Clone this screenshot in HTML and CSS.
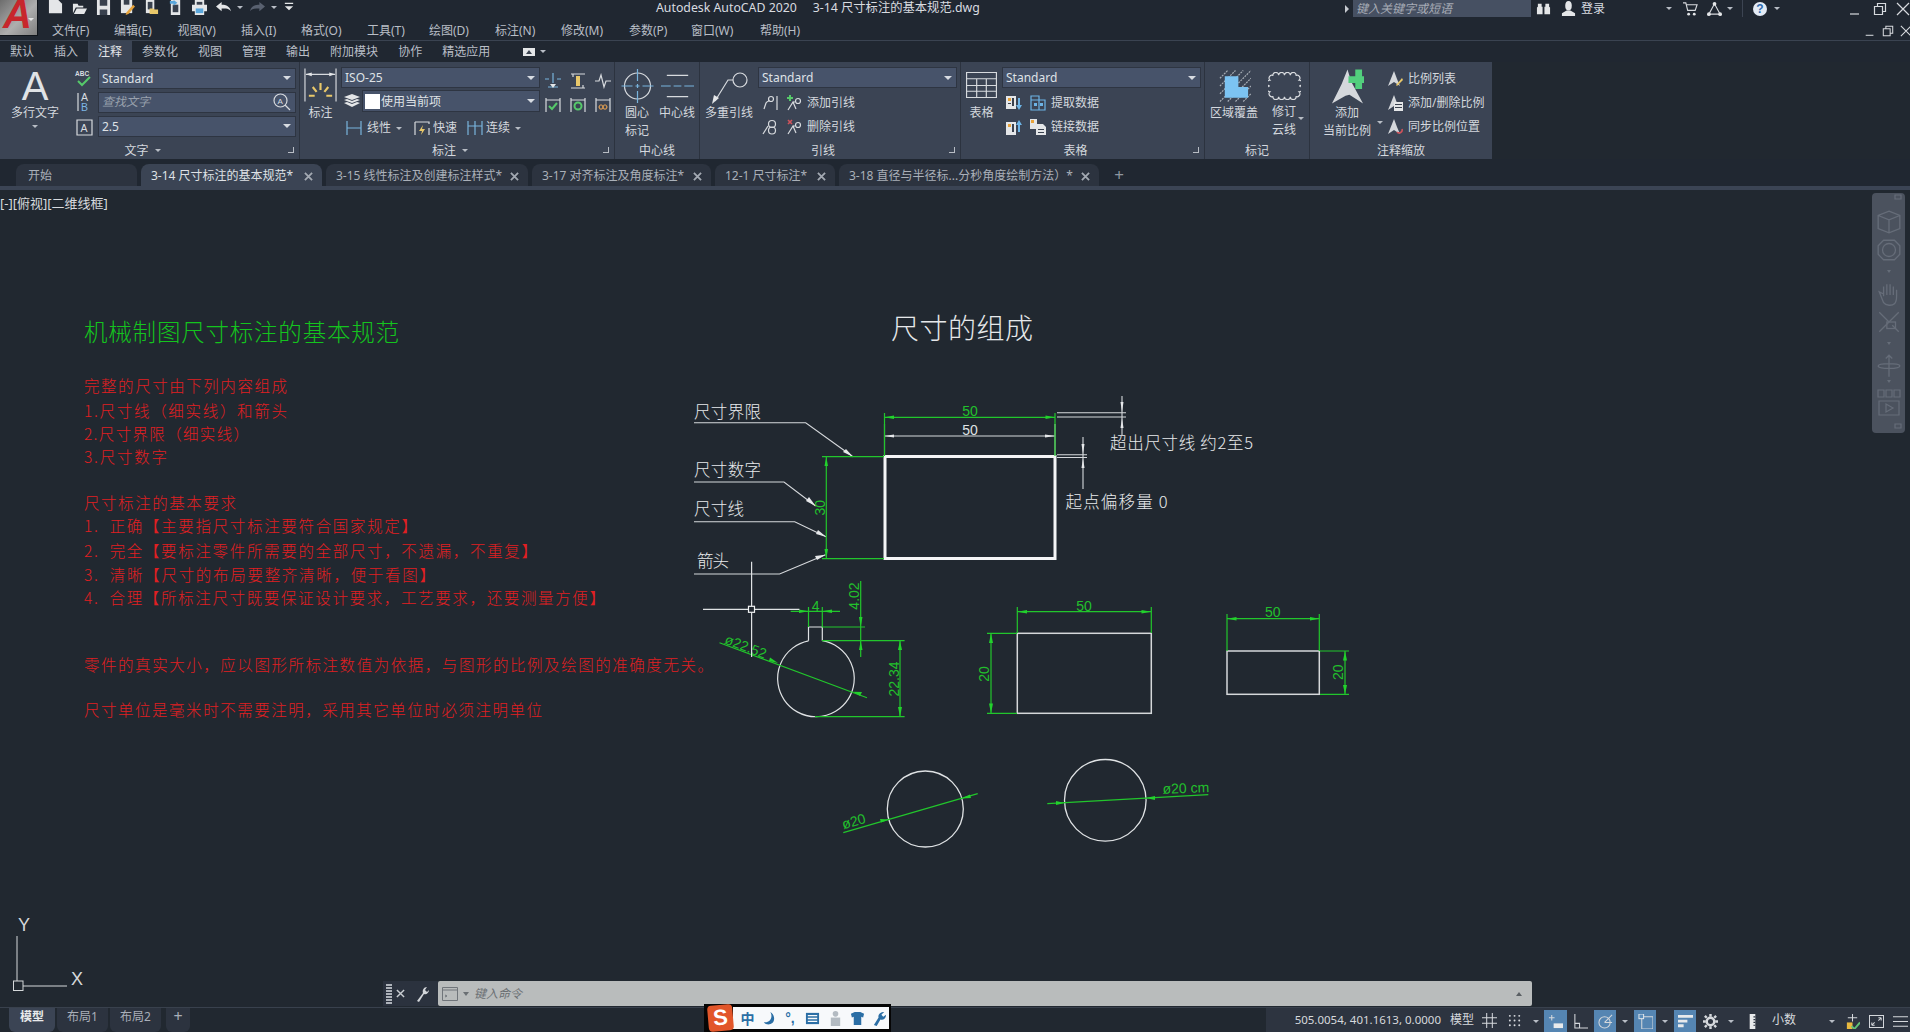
FILE: index.html
```html
<!DOCTYPE html>
<html lang="zh-CN">
<head>
<meta charset="utf-8">
<title>Autodesk AutoCAD 2020</title>
<link rel="stylesheet" href="styles.css">
</head>
<body>
<div class="app">
  <div class="appbtn"><span class="appbtn-a">A</span><i class="caret caret-light"></i></div>

  <header class="titlebar">
    <div class="qat">
      <svg class="qi" viewBox="0 0 16 16"><path class="f-lt" d="M1 0h10l4 4v10H1z"/></svg>
      <svg class="qi" viewBox="0 0 16 16"><path class="f-lt" d="M1 4h5l1 2h5v2H4L1 14zM5 9h11l-3 6H2z"/></svg>
      <svg class="qi" viewBox="0 0 16 16"><path class="f-lt" d="M1 0h14v16H1z"/><path class="f-dk" d="M4 0h8v6H4zM4 10h8v6H4z"/></svg>
      <svg class="qi" viewBox="0 0 16 16"><path class="f-lt" d="M1 0h12v14H1z"/><path class="f-dk" d="M4 0h6v5H4z"/><path class="f-or" d="M7 13l7-8 2 2-7 8-3 1z"/></svg>
      <svg class="qi" viewBox="0 0 16 16"><path class="f-lt" d="M2 0h9v14H2z"/><path class="f-dk" d="M4 2h5v8H4z"/><path class="f-yl" d="M6 9h4l1 1h4v5H6z"/></svg>
      <svg class="qi" viewBox="0 0 16 16"><path class="f-lt" d="M3 0h10v16H3z"/><path class="f-dk" d="M5 5h6v8H5z"/><path class="f-bl" d="M2 1h4V0l4 3-4 3V4H2z"/></svg>
      <svg class="qi" viewBox="0 0 16 16"><path class="f-lt" d="M3 0h10v5h3v7h-3v4H3v-4H0V5h3z"/><path class="f-dk" d="M5 2h6v3H5z"/><path class="f-bl" d="M4 9h8v5H4z"/></svg>
      <svg class="qi" viewBox="0 0 16 16"><path class="f-lt" d="M0 7l6-5v3c5 0 9 2 10 7-2-3-5-3-10-3v3z"/></svg>
      <i class="caret caret-light qat-gap"></i>
      <svg class="qi qi-dim" viewBox="0 0 16 16"><path d="M16 7l-6-5v3C5 5 1 7 0 12c2-3 5-3 10-3v3z"/></svg>
      <i class="caret caret-light qat-gap"></i>
      <svg class="qi qi-menu" viewBox="0 0 12 12"><path class="f-lt" d="M1 1h10v1.500H1zM1 5h10L6 10z"/></svg>
    </div>
    <div class="title">Autodesk AutoCAD 2020&nbsp;&nbsp;&nbsp;&nbsp; 3-14 尺寸标注的基本规范.dwg</div>
    <div class="tb-right">
      <i class="caret-r"></i>
      <div class="search">键入关键字或短语</div>
      <svg class="ti" viewBox="0 0 16 16"><path class="f-lt" d="M2 3h4v3h1v8H1V7l1-1zM10 3h4v3l1 1v7H9V6h1z"/></svg>
      <svg class="ti" viewBox="0 0 16 16"><ellipse class="f-lt" cx="8" cy="5" rx="3.500" ry="5"/><path class="f-lt" d="M6 10h4l5 3v3H1v-3z"/></svg>
      <span class="login">登录</span>
      <i class="caret caret-light"></i>
      <svg class="ti" viewBox="0 0 16 16"><path class="s-lt" d="M0 2h3l2 8h8l2-6H4"/><circle class="f-lt" cx="6" cy="14" r="1.500"/><circle class="f-lt" cx="12" cy="14" r="1.500"/></svg>
      <svg class="ti" viewBox="0 0 16 16"><path class="s-lt" d="M8 3L2 14h12z"/><circle class="f-lt" cx="8" cy="3" r="2"/><circle class="f-lt" cx="2" cy="14" r="2"/><circle class="f-lt" cx="14" cy="14" r="2"/></svg>
      <i class="caret caret-light"></i>
      <i class="tb-sep"></i>
      <span class="help">?</span>
      <i class="caret caret-light"></i>
      <svg class="wb wb-end" viewBox="0 0 14 14"><path class="s-lt" d="M2 12h9"/></svg>
      <svg class="wb" viewBox="0 0 14 14"><path class="s-lt" d="M1.500 4.500h8v8h-8zM4.500 4.500v-3h8v8h-3"/></svg>
      <svg class="wb" viewBox="0 0 14 14"><path class="s-lt" d="M1 1l12 12M13 1L1 13"/></svg>
    </div>
  </header>

  <nav class="menubar">
    <span>文件(F)</span><span>编辑(E)</span><span>视图(V)</span><span>插入(I)</span><span>格式(O)</span><span>工具(T)</span><span>绘图(D)</span><span>标注(N)</span><span>修改(M)</span><span>参数(P)</span><span>窗口(W)</span><span>帮助(H)</span>
    <div class="menu-win">
      <svg class="wb" viewBox="0 0 14 14"><path class="s-lt" d="M2 12h9"/></svg>
      <svg class="wb" viewBox="0 0 14 14"><path class="s-lt" d="M1.500 4.500h8v8h-8zM4.500 4.500v-3h8v8h-3"/></svg>
      <svg class="wb" viewBox="0 0 14 14"><path class="s-lt" d="M1 1l12 12M13 1L1 13"/></svg>
    </div>
  </nav>

  <div class="ribtabs">
    <span>默认</span><span>插入</span><span class="active">注释</span><span>参数化</span><span>视图</span><span>管理</span><span>输出</span><span>附加模块</span><span>协作</span><span>精选应用</span>
    <span class="cam"><svg class="cam-ic" viewBox="0 0 14 10"><path class="f-lt" d="M1 1h12v8H1z"/><path class="f-dk" d="M4 7l3-4 3 4z"/></svg><i class="caret caret-light"></i></span>
  </div>

  <section class="ribbon">
    <!-- 文字 -->
    <div class="panel p-text">
      <div class="pbody">
        <div class="big big-text"><span class="big-a">A</span><span class="lbl">多行文字</span><i class="caret caret-light"></i></div>
        <div class="iconcol">
          <svg class="ci" viewBox="0 0 20 20"><text class="abc" x="1" y="8">ABC</text><path class="s-gn2" d="M4 13l4 4 8-8"/></svg>
          <svg class="ci" viewBox="0 0 20 20"><path class="s-lt" d="M4 1v18"/><text class="ab" x="7" y="9">A</text><text class="ab ab-b" x="7" y="19">B</text></svg>
          <svg class="ci" viewBox="0 0 20 20"><path class="s-lt" d="M3 4h15v15H3z"/><text class="ab" x="6.500" y="16">A</text></svg>
        </div>
        <div class="combocol">
          <div class="combo"><span>Standard</span><i class="caret"></i></div>
          <div class="combo combo-find"><em>查找文字</em><svg class="find" viewBox="0 0 18 18"><circle class="s-lt" cx="7.500" cy="7.500" r="6.500"/><path class="s-lt" d="M12 12l5 5"/><text class="ab-s" x="4.500" y="11">A</text></svg></div>
          <div class="combo"><span>2.5</span><i class="caret"></i></div>
        </div>
      </div>
      <div class="ptitle"><span>文字</span><i class="caret caret-light"></i></div>
      <i class="launcher"></i>
    </div>
    <!-- 标注 -->
    <div class="panel p-dim">
      <div class="pbody">
        <div class="big big-dim">
          <svg class="bigic" viewBox="0 0 34 36"><path class="s-lt" d="M1 0v34M33 0v34M2 6h30"/><path class="f-lt" d="M2 6l6-2v4zM32 6l-6-2v4z"/><path class="s-yl" d="M17 15v7M9 19l4 5M25 19l-4 5M5 28h6M29 28h-6"/></svg>
          <span class="lbl">标注</span>
        </div>
        <div class="dimcol">
          <div class="combo"><span>ISO-25</span><i class="caret"></i></div>
          <div class="dimrow2">
            <svg class="layer" viewBox="0 0 16 16"><path class="f-lt" d="M8 1l8 3-8 3-8-3zM0 7l3-1 5 2 5-2 3 1-8 3zM0 10l3-1 5 2 5-2 3 1-8 4z"/></svg>
            <div class="combo combo-layer"><b class="swatch"></b><span>使用当前项</span><i class="caret"></i></div>
          </div>
          <div class="dimrow3">
            <svg class="si" viewBox="0 0 16 16"><path class="s-bl" d="M1 1v14M15 1v14M1 8h14"/></svg>
            <span class="tx">线性<i class="caret caret-light"></i></span>
            <svg class="si" viewBox="0 0 16 16"><path class="s-lt" d="M1 2h14v2M1 2v13M15 15V8"/><path class="f-yl" d="M9 5l-4 6h3l-1 4 4-6H8z"/></svg>
            <span class="tx">快速</span>
            <svg class="si" viewBox="0 0 16 16"><path class="s-bl" d="M1 1v14M8 1v14M15 1v14M1 6h14"/></svg>
            <span class="tx">连续<i class="caret caret-light"></i></span>
          </div>
        </div>
        <div class="dimtools">
          <svg class="si" viewBox="0 0 16 16"><path class="s-bl" d="M8 0v10M0 6h4M12 6h4M3 14h10"/><path class="f-lt" d="M5 11h6l-3 4z"/></svg>
          <svg class="si" viewBox="0 0 16 16"><path class="s-lt" d="M1 1h14M1 15h14M3 1v3M13 12v3"/><path class="f-yl" d="M6 3h4v10H6z"/></svg>
          <svg class="si" viewBox="0 0 16 16"><path class="s-lt" d="M0 8h4l2-6 3 12 2-6h5"/></svg>
          <svg class="si" viewBox="0 0 16 16"><path class="s-lt" d="M1 1v14M15 1v14M1 3h14"/><path class="s-gn2" d="M4 9l3 3 5-6"/></svg>
          <svg class="si" viewBox="0 0 16 16"><path class="s-lt" d="M1 1v14M15 1v14M1 3h14"/><circle class="s-gn2" cx="8" cy="9" r="3.500"/></svg>
          <svg class="si" viewBox="0 0 16 16"><path class="s-lt" d="M1 1v14M15 1v14M1 3h14"/><path class="s-or" d="M4 10c1-3 3-3 4 0s3 3 4 0c-1-3-3-3-4 0s-3 3-4 0z"/></svg>
        </div>
      </div>
      <div class="ptitle"><span>标注</span><i class="caret caret-light"></i></div>
      <i class="launcher"></i>
    </div>
    <!-- 中心线 -->
    <div class="panel p-center">
      <div class="pbody">
        <div class="big">
          <svg class="bigic" viewBox="0 0 32 36"><circle class="s-lt" cx="16" cy="18" r="13"/><path class="s-bl" d="M16 1v12M16 23v12M0 18h11M21 18h11M14 18h4M16 16v4"/></svg>
          <span class="lbl">圆心</span><span class="lbl">标记</span>
        </div>
        <div class="big">
          <svg class="bigic" viewBox="0 0 34 36"><path class="s-lt" d="M6 7h22M6 29h22"/><path class="s-bl" d="M0 18h10M13 18h8M24 18h10"/></svg>
          <span class="lbl">中心线</span>
        </div>
      </div>
      <div class="ptitle ptitle-plain"><span>中心线</span></div>
    </div>
    <!-- 引线 -->
    <div class="panel p-leader">
      <div class="pbody">
        <div class="big">
          <svg class="bigic bigic-w" viewBox="0 0 38 36"><circle class="s-lt" cx="30" cy="12" r="7"/><path class="s-lt" d="M23 12h-5L5 33"/><path class="f-lt" d="M2 36l2-9 5 3z"/></svg>
          <span class="lbl">多重引线</span>
        </div>
        <div class="stack">
          <div class="combo"><span>Standard</span><i class="caret"></i></div>
          <div class="row">
            <svg class="si" viewBox="0 0 16 16"><path class="s-lt" d="M15 1v14M2 14l2-6c1-2 3-1 3-3"/><circle class="s-lt" cx="9" cy="4" r="2.500"/></svg>
            <svg class="si" viewBox="0 0 16 16"><path class="s-gn2" d="M4 0v6M1 3h6"/><path class="s-lt" d="M2 15l5-8 3 7M7 7h2"/><circle class="s-lt" cx="12" cy="6" r="2.500"/></svg>
            <span class="tx">添加引线</span>
          </div>
          <div class="row">
            <svg class="si" viewBox="0 0 16 16"><circle class="s-lt" cx="10" cy="5" r="3.500"/><circle class="s-lt" cx="10" cy="11.500" r="3.500"/><path class="s-lt" d="M1 15l5-8"/></svg>
            <svg class="si" viewBox="0 0 16 16"><path class="s-rd" d="M2 1l4 4M6 1L2 5"/><path class="s-lt" d="M2 15l5-8 3 7M7 7h2"/><circle class="s-lt" cx="12" cy="6" r="2.500"/></svg>
            <span class="tx">删除引线</span>
          </div>
        </div>
      </div>
      <div class="ptitle"><span>引线</span></div>
      <i class="launcher"></i>
    </div>
    <!-- 表格 -->
    <div class="panel p-table">
      <div class="pbody">
        <div class="big">
          <svg class="bigic bigic-t" viewBox="0 0 32 27"><path class="s-lt" d="M.5.5h31v26H.5zM.5 7h31M.5 14h31M.5 20h31M11 7v19.500M21 7v19.500"/></svg>
          <span class="lbl">表格</span>
        </div>
        <div class="stack">
          <div class="combo"><span>Standard</span><i class="caret"></i></div>
          <div class="row">
            <svg class="si" viewBox="0 0 16 16"><path class="f-lt" d="M0 1h10v13H0z"/><path class="f-or" d="M2 3h3v3H2z"/><path class="f-dk" d="M6 3h2v8H6zM2 8h3v1H2z"/><path class="f-sky" d="M12 3h2v7h2l-3 5-3-5h2z"/></svg>
            <svg class="si" viewBox="0 0 16 16"><path class="s-sky" d="M1 1h8v14H1zM1 5h14v10H1z"/><path class="f-sky" d="M4 8h3v3H4zM10 8h3v3h-3z"/></svg>
            <span class="tx">提取数据</span>
          </div>
          <div class="row">
            <svg class="si" viewBox="0 0 16 16"><path class="f-lt" d="M0 3h10v13H0z"/><path class="f-or" d="M2 5h3v3H2z"/><path class="f-dk" d="M6 5h2v8H6z"/><path class="f-sky" d="M12 13h2V6h2l-3-5-3 5h2z"/></svg>
            <svg class="si" viewBox="0 0 16 16"><path class="f-lt" d="M0 0h7v10H0z"/><path class="f-or" d="M1 1h3v3H1z"/><path class="f-lt" d="M6 5h7l3 3v8H6z"/><path class="f-dk" d="M8 10h6v1H8zM8 13h6v1H8z"/></svg>
            <span class="tx">链接数据</span>
          </div>
        </div>
      </div>
      <div class="ptitle"><span>表格</span></div>
      <i class="launcher"></i>
    </div>
    <!-- 标记 -->
    <div class="panel p-mark">
      <div class="pbody">
        <div class="big">
          <svg class="bigic" viewBox="0 0 34 36"><path class="s-hatch" d="M2 10L10 2M2 18L18 2M2 26L26 2M2 34L34 2M10 34l24-24M18 34l16-16M26 34l8-8"/><path class="f-ice" d="M7 8h14v11h10v11H7z"/></svg>
          <span class="lbl">区域覆盖</span>
        </div>
        <div class="big big-cloud">
          <svg class="bigic" viewBox="0 0 34 28"><path class="s-lt" d="M5 3a3 3 0 0 1 6 0 3 3 0 0 1 6 0 3 3 0 0 1 6 0 3 3 0 0 1 6 0 3 3 0 0 1 3 5 3 3 0 0 1 0 6 3 3 0 0 1 0 6 3 3 0 0 1-3 5 3 3 0 0 1-6 0 3 3 0 0 1-6 0 3 3 0 0 1-6 0 3 3 0 0 1-6 0 3 3 0 0 1-3-5 3 3 0 0 1 0-6 3 3 0 0 1 0-6 3 3 0 0 1 3-5z"/></svg>
          <span class="lbl">修订</span><span class="lbl">云线</span><i class="caret caret-light cloud-caret"></i>
        </div>
      </div>
      <div class="ptitle ptitle-plain"><span>标记</span></div>
    </div>
    <!-- 注释缩放 -->
    <div class="panel p-scale">
      <div class="pbody">
        <div class="big">
          <svg class="bigic" viewBox="0 0 34 36"><path class="f-star" d="M17 1l4 13 12 22-14-9-4 1-14 8 10-20z"/><path class="f-plus" d="M18 8h7V1h7v7h2v7h-2v6h-7v-6h-7z"/></svg>
          <span class="lbl">添加</span><span class="lbl">当前比例</span><i class="caret caret-light scale-caret"></i>
        </div>
        <div class="scale-rows">
          <div class="row"><svg class="si" viewBox="0 0 16 16"><path class="f-star" d="M7 0l3 8 3 7-6-4-6 4z"/><path class="f-yl" d="M9 14l6-7 1 2-6 6z"/></svg><span class="tx">比例列表</span></div>
          <div class="row"><svg class="si" viewBox="0 0 16 16"><path class="f-star" d="M7 0l3 8 3 7-6-4-6 4z"/><path class="f-lt" d="M7 7h9v9H7z"/><path class="f-dk" d="M8 9h7v1H8zM8 12h7v1H8z"/></svg><span class="tx">添加/删除比例</span></div>
          <div class="row"><svg class="si" viewBox="0 0 16 16"><path class="f-star" d="M7 0l3 8 3 7-6-4-6 4z"/><path class="s-rd" d="M15 10a3 3 0 0 1-5 3"/></svg><span class="tx">同步比例位置</span></div>
        </div>
      </div>
      <div class="ptitle ptitle-plain"><span>注释缩放</span></div>
    </div>
  </section>

  <div class="doctabs">
    <div class="dtab"><span>开始</span></div>
    <div class="dtab active"><span>3-14 尺寸标注的基本规范*</span><svg class="x" viewBox="0 0 10 10"><path d="M1 1l8 8M9 1L1 9"/></svg></div>
    <div class="dtab"><span>3-15 线性标注及创建标注样式*</span><svg class="x" viewBox="0 0 10 10"><path d="M1 1l8 8M9 1L1 9"/></svg></div>
    <div class="dtab"><span>3-17 对齐标注及角度标注*</span><svg class="x" viewBox="0 0 10 10"><path d="M1 1l8 8M9 1L1 9"/></svg></div>
    <div class="dtab"><span>12-1 尺寸标注*</span><svg class="x" viewBox="0 0 10 10"><path d="M1 1l8 8M9 1L1 9"/></svg></div>
    <div class="dtab"><span>3-18 直径与半径标...分秒角度绘制方法）*</span><svg class="x" viewBox="0 0 10 10"><path d="M1 1l8 8M9 1L1 9"/></svg></div>
    <div class="dplus">+</div>
  </div>
  <div class="docstrip"></div>

  <main class="canvas">
    <div class="vplabel">[-][俯视][二维线框]</div>

    <svg class="drawing" viewBox="0 190 1910 817">
      <!-- 说明文字 -->
      <text class="t-title" x="84" y="340.500" textLength="315">机械制图尺寸标注的基本规范</text>
      <g class="t-red">
        <text x="84" y="392" textLength="203">完整的尺寸由下列内容组成</text>
        <text x="84" y="416.500" textLength="203">1.尺寸线（细实线）和箭头</text>
        <text x="84" y="440" textLength="165">2.尺寸界限（细实线）</text>
        <text x="84" y="463" textLength="83">3.尺寸数字</text>
        <text x="84" y="509" textLength="152">尺寸标注的基本要求</text>
        <text x="84" y="532" textLength="333">1.&#160;&#160;正确【主要指尺寸标注要符合国家规定】</text>
        <text x="84" y="556.500" textLength="453">2.&#160;&#160;完全【要标注零件所需要的全部尺寸，不遗漏，不重复】</text>
        <text x="84" y="580.500" textLength="351">3.&#160;&#160;清晰【尺寸的布局要整齐清晰，便于看图】</text>
        <text x="84" y="603.500" textLength="521">4.&#160;&#160;合理【所标注尺寸既要保证设计要求，工艺要求，还要测量方便】</text>
        <text x="84" y="670.500" textLength="629">零件的真实大小，应以图形所标注数值为依据，与图形的比例及绘图的准确度无关。</text>
        <text x="84" y="715.500" textLength="458">尺寸单位是毫米时不需要注明，采用其它单位时必须注明单位</text>
      </g>
      <text class="t-head" x="891" y="339" textLength="142">尺寸的组成</text>

      <g class="t-lab">
        <text x="694" y="417.500" textLength="67">尺寸界限</text>
        <text x="694" y="475.500" textLength="67">尺寸数字</text>
        <text x="694" y="514.500" textLength="50">尺寸线</text>
        <text x="697" y="567" textLength="32">箭头</text>
        <text x="1110" y="448.500" textLength="143">超出尺寸线 约2至5</text>
        <text x="1065.500" y="507.500" textLength="102">起点偏移量 0</text>
      </g>

      <!-- 引出线 -->
      <g class="ln-w">
        <path d="M694 422.700H805.700L853 456.700"/>
        <path d="M694 482H784L815.600 506"/>
        <path d="M694 521.700H794.700L826 536.700"/>
        <path d="M694 574H779.600L825.500 554.700"/>
        <path d="M1057 412.700H1126M1057 417H1126M1122 396V435"/>
        <path d="M1057 454.700H1087M1057 457.500H1087M1083 437V489"/>
        <path d="M884.500 456V424M1055 456V424M884.500 436H1055"/>
      </g>
      <g class="ar-w">
        <polygon points="853,456.700 843,452 846,449"/>
        <polygon points="815.600,506 806,501 809,497"/>
        <polygon points="826,536.700 816,534 818,530"/>
        <polygon points="825.500,554.700 815,556 817,560"/>
        <polygon points="884.500,436 894,434.500 894,437.500"/>
        <polygon points="1055,436 1045,434.500 1045,437.500"/>
        <polygon points="1122,412 1120.500,402 1123.500,402"/>
        <polygon points="1122,418 1120.500,428 1123.500,428"/>
        <polygon points="1083,454 1081.500,444 1084.500,444"/>
        <polygon points="1083,458 1081.500,468 1084.500,468"/>
      </g>

      <!-- 主矩形 -->
      <rect class="box-thick" x="885" y="456.500" width="170" height="102"/>

      <!-- 绿色标注 1 -->
      <g class="ln-g">
        <path d="M884.500 413V456M1055 413V456M884.500 417.300H1055"/>
        <path d="M822 456.700H884M822 558.700H884M826.300 456.700V558.700"/>
      </g>
      <g class="ar-g">
        <polygon points="884.500,417.300 894,415.500 894,419"/>
        <polygon points="1055,417.300 1045.500,415.500 1045.500,419"/>
        <polygon points="826.300,456.700 824.500,466 828,466"/>
        <polygon points="826.300,558.700 824.500,549 828,549"/>
      </g>
      <g class="t-dim">
        <text x="970" y="415.500">50</text>
        <text class="dim-w" x="970" y="434.500">50</text>
        <text transform="rotate(-90 825 507.700)" x="825" y="507.700">30</text>
      </g>

      <!-- 键槽圆 -->
      <g class="ln-wt">
        <path d="M808.500 640.700V627H822.300V640.700"/>
        <path d="M808.500 640.900A38.300 38.300 0 1 0 822.300 640.700"/>
      </g>
      <g class="ln-g">
        <path d="M790.700 611.300H840M808.500 607V627M822.300 607V627"/>
        <path d="M822 627H865M822 640.700H904.600M860.700 581V657"/>
        <path d="M815 716.700H904.600M900 640.700V716.700"/>
        <path d="M719.500 642.700L867 697.700"/>
      </g>
      <g class="ar-g">
        <polygon points="808.500,611.300 799,609.500 799,613"/>
        <polygon points="822.300,611.300 832,609.500 832,613"/>
        <polygon points="860.700,627 859,617 862.500,617"/>
        <polygon points="860.700,640.700 859,650 862.500,650"/>
        <polygon points="900,640.700 898,650 902,650"/>
        <polygon points="900,716.700 898,707 902,707"/>
        <polygon points="778,663 769,661 770,657.500"/>
        <polygon points="853,691.700 862,692 860,696"/>
      </g>
      <g class="t-dim">
        <text x="815.600" y="610.500">4</text>
        <text transform="rotate(-90 859 596)" x="859" y="596">4.02</text>
        <text transform="rotate(-90 899 679)" x="899" y="679">22.34</text>
        <text transform="rotate(21 744 651)" x="744" y="651">ø22.52</text>
      </g>

      <!-- 十字光标 -->
      <g class="ln-wt">
        <path d="M751.600 561.700V606M751.600 612.500V657M703 609.300H748.500M755 609.300H799.400"/>
        <rect class="pick" x="748.500" y="606.300" width="6" height="6"/>
      </g>

      <!-- 矩形 2 -->
      <rect class="box" x="1017.300" y="633.300" width="134" height="80"/>
      <g class="ln-g">
        <path d="M1017.300 607V633M1151.300 607V633M1017.300 611.700H1151.300"/>
        <path d="M987 633.300H1017M987 713.300H1017M991 633.300V713.300"/>
      </g>
      <g class="ar-g">
        <polygon points="1017.300,611.700 1027,610 1027,613.500"/>
        <polygon points="1151.300,611.700 1141.500,610 1141.500,613.500"/>
        <polygon points="991,633.300 989,643 993,643"/>
        <polygon points="991,713.300 989,703.500 993,703.500"/>
      </g>
      <g class="t-dim">
        <text x="1084" y="610.500">50</text>
        <text transform="rotate(-90 989 674)" x="989" y="674">20</text>
      </g>

      <!-- 矩形 3 -->
      <rect class="box" x="1227" y="651" width="92.300" height="43.300"/>
      <g class="ln-g">
        <path d="M1227 614V651M1319.300 614V651M1227 618.700H1319.300"/>
        <path d="M1320 651H1349M1320 694.300H1349M1345 651V694.300"/>
      </g>
      <g class="ar-g">
        <polygon points="1227,618.700 1236.500,617 1236.500,620.500"/>
        <polygon points="1319.300,618.700 1310,617 1310,620.500"/>
        <polygon points="1345,651 1343,660.500 1347,660.500"/>
        <polygon points="1345,694.300 1343,685 1347,685"/>
      </g>
      <g class="t-dim">
        <text x="1272.700" y="616.500">50</text>
        <text transform="rotate(-90 1343 672.300)" x="1343" y="672.300">20</text>
      </g>

      <!-- 圆 -->
      <circle class="circ" cx="925.300" cy="809" r="38"/>
      <circle class="circ" cx="1105.300" cy="800.300" r="40.800"/>
      <g class="ln-g">
        <path d="M843.300 832.700L977.700 793.700"/>
        <path d="M1047.300 803.700L1208.300 794.700"/>
      </g>
      <g class="ar-g">
        <polygon points="889,819.500 880,819 881,822.500"/>
        <polygon points="961.500,798.500 971,798 970,794.500"/>
        <polygon points="1064.500,803 1056,801 1056,805"/>
        <polygon points="1146,798 1155,796 1155,800"/>
      </g>
      <g class="t-dim">
        <text transform="rotate(-16 855 826)" x="855" y="826">ø20</text>
        <text transform="rotate(-2 1186 793)" x="1186" y="793">ø20 cm</text>
      </g>

      <!-- UCS -->
      <g class="ucs">
        <path d="M17 936V981M23 986H67"/>
        <rect x="13.500" y="981" width="9.500" height="9.500"/>
      </g>
      <text class="ucs-t" x="18" y="931">Y</text>
      <text class="ucs-t" x="71" y="985">X</text>
    </svg>

    <aside class="navbar">
      <svg class="nv-top" viewBox="0 0 8 6"><path d="M1 1h6v4H1z"/></svg>
      <svg class="nv" viewBox="0 0 24 24"><path d="M12 2l10 4v12l-10 4-10-4V6zM2 6l10 4 10-4M12 10v12"/></svg>
      <svg class="nv" viewBox="0 0 24 24"><path d="M7 3h10l5 5v8l-5 5H7l-5-5V8z"/><circle cx="12" cy="12" r="6"/></svg>
      <i class="nv-caret"></i>
      <svg class="nv" viewBox="0 0 24 24"><path d="M7 14V5M10 13V3M13 13V3M16 13V5M19 14V8M7 12l-4-2 4 10c2 3 8 3 10 1 2-2 2-5 2-7"/></svg>
      <svg class="nv" viewBox="0 0 24 24"><path d="M3 3l9 9M21 3L3 21M15 15l6 6"/><rect x="10" y="12" width="8" height="6"/></svg>
      <i class="nv-caret"></i>
      <svg class="nv" viewBox="0 0 24 24"><path d="M12 2v20M9 5l3-3 3 3M2 12c0-3 20-3 20 0s-20 3-20 0z"/></svg>
      <i class="nv-caret nv-caret-tight"></i>
      <svg class="nv-mini" viewBox="0 0 24 12"><path d="M1 2h6v7H1zM9 2h6v7H9zM17 2h6v7h-6z"/></svg>
      <svg class="nv-play" viewBox="0 0 24 16"><path d="M2 1h20v14H2zM9 4l7 4-7 4z"/></svg>
      <svg class="nv-top nv-bottom" viewBox="0 0 8 6"><path d="M1 1h6v4H1z"/></svg>
    </aside>

    <div class="cmdline">
      <div class="cmd-handle">
        <i class="grip"></i>
        <svg class="cmd-x" viewBox="0 0 10 10"><path d="M1 1l8 8M9 1L1 9"/></svg>
        <svg class="cmd-wr" viewBox="0 0 14 16"><path d="M2 15l6-8c-1-3 1-6 4-6L10 4l2 2 2-2c0 3-3 5-5 4l-5 8z"/></svg>
      </div>
      <div class="cmd-input">
        <svg class="cmd-ic" viewBox="0 0 18 14"><path d="M.5.5h15v13H.5z"/><path d="M.5 3h15M3 8l2 1-2 1"/></svg>
        <i class="caret caret-gray"></i>
        <em>键入命令</em>
        <i class="cmd-up"></i>
      </div>
    </div>
  </main>

  <footer class="statusbar">
    <div class="ltabs">
      <span class="ltab active">模型</span><span class="ltab">布局1</span><span class="ltab">布局2</span><span class="ltab ltab-add">+</span>
    </div>
    <div class="stat">
      <span class="coords">505.0054, 401.1613, 0.0000</span>
      <span class="st-model">模型</span>
      <svg class="st" viewBox="0 0 16 16"><path d="M5 0v16M11 0v16M0 5h16M0 11h16"/></svg>
      <svg class="st" viewBox="0 0 16 16"><path class="dots" d="M3 3h.1M8 3h.1M13 3h.1M3 8h.1M8 8h.1M13 8h.1M3 13h.1M8 13h.1M13 13h.1"/></svg>
      <span class="cell"><i class="caret caret-light"></i></span>
      <span class="cell on"><svg class="st" viewBox="0 0 16 16"><path d="M1 4h6M4 1v6"/><path class="fill" d="M6 10h10v5H6z"/></svg></span>
      <span class="cell"><svg class="st" viewBox="0 0 16 16"><path d="M2 0v15h14"/><path d="M2 10h5v5"/></svg></span>
      <span class="cell on"><svg class="st" viewBox="0 0 16 16"><circle cx="7" cy="9" r="6"/><path d="M7 9l8-8M7 9h8"/></svg></span>
      <span class="cell"><i class="caret caret-light"></i></span>
      <span class="cell on"><svg class="st" viewBox="0 0 16 16"><path d="M4 3h12v13H4z"/><rect x="1" y="0" width="5" height="5" class="on-fill"/></svg></span>
      <span class="cell"><i class="caret caret-light"></i></span>
      <span class="cell on"><svg class="st" viewBox="0 0 16 16"><path class="fill" d="M0 1h16v3H0zM0 6h10v3H0zM0 11h6v3H0z"/></svg></span>
      <span class="cell"><svg class="st" viewBox="0 0 16 16"><circle cx="8" cy="8" r="4" class="gear"/><path class="gear" d="M8 0v3M8 13v3M0 8h3M13 8h3M2 2l2 2M12 12l2 2M14 2l-2 2M4 12l-2 2"/></svg></span>
      <span class="cell"><i class="caret caret-light"></i></span>
      <span class="cell"><svg class="st" viewBox="0 0 16 16"><path class="fill" d="M5 0h6v16H5z"/><path class="ruler" d="M9 3h2M9 6h2M9 9h2M9 12h2"/></svg></span>
      <span class="st-unit">小数</span>
      <span class="cell"><i class="caret caret-light"></i></span>
      <span class="cell"><svg class="st" viewBox="0 0 16 16"><path d="M8 0v8M3 4h10"/><path class="st-yl" d="M2 9h6v7H2z"/><path class="st-gn" d="M7 13l3 3 6-7"/></svg></span>
      <span class="cell"><svg class="st" viewBox="0 0 16 16"><path d="M.5 1.500h15v13H.5zM3 12l3-3M3 12h3M3 12V9M13 4l-3 3M13 4h-3M13 4v3"/></svg></span>
      <span class="cell"><svg class="st" viewBox="0 0 16 16"><path d="M0 3h16M0 8h16M0 13h16"/></svg></span>
    </div>
  </footer>

  <div class="ime">
    <div class="ime-inner">
      <span class="ime-s">S</span>
      <span class="ime-zh">中</span>
      <svg class="ime-ic" viewBox="0 0 16 16"><path class="ime-f" d="M10 1c3 5 0 12-7 11 3 4 11 3 11-4 0-3-2-6-4-7z"/></svg>
      <span class="ime-p">°,</span>
      <svg class="ime-ic" viewBox="0 0 16 16"><path class="ime-f" d="M1 2h14v12H1z"/><path class="ime-w" d="M3 5h10M3 8h10M3 11h10"/></svg>
      <svg class="ime-ic" viewBox="0 0 16 16"><circle class="ime-g" cx="8" cy="3" r="3"/><path class="ime-g" d="M3 7h10v9H3z"/></svg>
      <svg class="ime-ic" viewBox="0 0 16 16"><path class="ime-f" d="M1 3l4-2h6l4 2-1 4-2-1v9H4V6L2 7z"/></svg>
      <svg class="ime-ic" viewBox="0 0 16 16"><path class="ime-f" d="M2 15l5-8c-1-3 2-6 6-6l-3 3 2 2 3-2c0 4-3 6-6 5l-4 7z"/></svg>
    </div>
  </div>
</div>
</body>
</html>
```

FILE: styles.css
```css
* { box-sizing: border-box; }
html, body { margin: 0; padding: 0; }
body {
  background: #212830;
  color: #d4d8de;
  font: 12px/1 "Noto Sans", "Noto Sans CJK SC", sans-serif;
  overflow: hidden;
}
svg { display: block; }
i { display: block; font-style: normal; }

.app {
  position: relative;
  width: 1910px;
  height: 1032px;
  display: flex;
  flex-direction: column;
  overflow: hidden;
}

/* shared paint classes */
.f-lt { fill: #e4e6e8; }
.f-dk { fill: #39414e; }
.f-or { fill: #e8a33a; }
.f-yl { fill: #e9c86a; }
.f-bl { fill: #5aa7dc; }
.f-sky { fill: #6db4e6; }
.f-ice { fill: #7cc3f2; }
.f-star { fill: #d5d8dc; }
.f-plus { fill: #52cf7d; }
.s-lt, .s-bl, .s-yl, .s-gn2, .s-or, .s-rd, .s-sky, .s-hatch { fill: none; stroke-width: 1.2; }
.s-lt { stroke: #d7dade; }
.s-bl { stroke: #79b4dd; }
.s-yl { stroke: #e9c86a; stroke-width: 2.2; }
.s-gn2 { stroke: #56c96a; stroke-width: 2; }
.s-or { stroke: #d99a52; }
.s-rd { stroke: #d0535b; stroke-width: 1.6; }
.s-sky { stroke: #6db4e6; }
.s-hatch { stroke: #aab0b8; stroke-dasharray: 2 1; }

.caret {
  width: 0; height: 0;
  border-left: 4px solid transparent;
  border-right: 4px solid transparent;
  border-top: 4px solid #d8dce2;
}
.caret-light {
  border-left-width: 3px;
  border-right-width: 3px;
  border-top-width: 3px;
  border-top-color: #b8bdc5;
}
.caret-gray { border-left-width: 3px; border-right-width: 3px; border-top-color: #6a6f73; }
.caret-r {
  width: 0; height: 0;
  border-top: 4px solid transparent;
  border-bottom: 4px solid transparent;
  border-left: 4px solid #c6cad0;
}

/* application button */
.appbtn {
  position: absolute;
  left: 0; top: 0;
  width: 38px; height: 36px;
  background: linear-gradient(135deg, #6d6d6d, #aeaeae 55%, #7f7f7f);
  border-right: 1px solid #10151b;
  border-bottom: 1px solid #10151b;
  overflow: hidden;
  z-index: 3;
}
.appbtn-a {
  position: absolute;
  left: 3px; top: -6px;
  font: italic bold 40px/1 "Liberation Sans", sans-serif;
  color: #c7262c;
}
.appbtn .caret { position: absolute; right: 3px; top: 18px; border-top-color: #e5e5e5; }

/* title bar */
.titlebar {
  height: 20px;
  flex: none;
  display: flex;
  align-items: flex-start;
  background: #202731;
}
.qat {
  width: 310px;
  margin-left: 43px;
  padding-top: 0;
  display: flex;
  align-items: center;
  height: 14px;
}
.qi { width: 15px; height: 15px; margin: 0 4.500px; flex: none; }
.qi-dim path { fill: #596170; }
.qi-menu { width: 10px; height: 10px; margin-left: 5px; }
.qat-gap { margin: 0 2px 0 2px; flex: none; }
.title {
  margin-left: 303px;
  font-size: 12.300px;
  line-height: 15px;
  color: #d9dce0;
  white-space: nowrap;
}
.tb-right {
  position: absolute;
  left: 1340px;
  top: 0;
  width: 570px;
  height: 17px;
  display: grid;
  grid-template-columns: 13px 178px 25px 24px 85px 8px 34px 14px 18px 6px 30px 4px 86px 30px 15px;
  justify-items: center;
  align-items: center;
}
.search {
  width: 178px;
  height: 17px;
  background: #465062;
  color: #a6acb6;
  font: italic 12px/15px "Noto Sans CJK SC", sans-serif;
  padding-left: 3px;
}
.ti { width: 15px; height: 15px; }
.login { justify-self: start; padding-left: 1px; font-size: 12px; color: #d8dce0; }
.tb-sep { width: 1px; height: 17px; background: #3c4452; }
.help {
  width: 14px; height: 14px;
  border-radius: 50%;
  background: #e3ebf5;
  color: #2f6cb0;
  font: bold 12px/14px "Liberation Sans", sans-serif;
  text-align: center;
}
.wb { width: 14px; height: 14px; }
.wb-end { justify-self: end; margin-right: 3px; }

/* menu bar */
.menubar {
  height: 21px;
  flex: none;
  display: grid;
  grid-template-columns: 62px 63.500px 63.500px 60px 66px 62px 66px 66px 68px 62px 69px 80px 1fr;
  align-items: center;
  padding: 2px 0 0 52px;
  background: #202731;
  border-bottom: 1px solid #3a4351;
  color: #b9bec6;
  white-space: nowrap;
}
.menu-win {
  display: flex;
  justify-content: flex-end;
  align-items: center;
}
.menu-win .wb { width: 12px; height: 12px; margin-left: 6px; }
.menu-win .wb:last-child { margin-right: -2px; }

/* ribbon tabs */
.ribtabs {
  height: 21px;
  flex: none;
  display: flex;
  background: #202731;
  color: #b9bec6;
}
.ribtabs > span {
  padding: 0 10px;
  line-height: 22px;
}
.ribtabs .active { background: #3b4454; color: #e3e6ea; }
.ribtabs .cam {
  display: flex;
  align-items: center;
  gap: 4px;
  padding-left: 22px;
}
.cam-ic { width: 14px; height: 10px; }

/* ribbon */
.ribbon {
  height: 97px;
  flex: none;
  width: 1492px;
  display: flex;
  color: #d4d8de;
}
.panel {
  position: relative;
  background: #3b4454;
  border-right: 1px solid #2c333f;
  display: flex;
  flex-direction: column;
  flex: none;
}
.p-text { width: 300px; }
.p-dim { width: 315px; }
.p-center { width: 85px; }
.p-leader { width: 261px; }
.p-table { width: 244px; }
.p-mark { width: 105px; }
.p-scale { width: 182px; border-right: 0; }

.pbody {
  height: 78px;
  display: flex;
  flex: none;
}
.ptitle {
  height: 19px;
  display: flex;
  align-items: center;
  justify-content: center;
  gap: 6px;
  padding: 2px 14px 0 0;
  color: #d4d8de;
}
.ptitle-plain { padding-right: 0; }
.launcher {
  position: absolute;
  right: 5px;
  bottom: 6px;
  width: 6px; height: 6px;
  border-right: 1.500px solid #b8bdc5;
  border-bottom: 1.500px solid #b8bdc5;
}

.big {
  position: relative;
  display: flex;
  flex-direction: column;
  align-items: center;
  padding-top: 6px;
  flex: none;
}
.bigic { width: 33px; height: 36px; }
.big .lbl { line-height: 17.500px; white-space: nowrap; }
.big-text { width: 70px; }
.big-text .caret { margin-top: 3px; }
.big-a {
  height: 36px;
  font: 40px/36px "Liberation Sans", sans-serif;
  color: #e0e3e6;
}
.big-dim { width: 41px; }
.bigic-w { width: 38px; }
.bigic-t { width: 31px; height: 26px; margin: 4px 0 6px; }
.big-cloud .bigic { height: 28px; margin: 4px 0 3px; }
.cloud-caret { position: absolute; right: 1px; top: 55px; }
.scale-caret { position: absolute; right: 1px; top: 59px; }

.p-center .big:first-child { width: 44px; }
.p-center .big:nth-child(2) { width: 36px; }
.p-leader .big { width: 58px; }
.p-table .big { width: 41px; }
.p-mark .big:first-child { width: 58px; }
.p-mark .big:nth-child(2) { width: 42px; }
.p-scale .big { width: 74px; }

.iconcol {
  width: 28px;
  padding-top: 6px;
  display: flex;
  flex-direction: column;
  align-items: center;
  gap: 4px;
}
.ci { width: 20px; height: 20px; }
.abc { font: bold 6.500px "Liberation Sans", sans-serif; fill: #d8dce0; }
.ab { font: 10.500px "Liberation Sans", sans-serif; fill: #d8dce0; }
.ab-b { fill: #7db6e4; }
.ab-s { font: 8px "Liberation Sans", sans-serif; fill: #d8dce0; }

.combocol {
  width: 198px;
  padding-top: 5.500px;
  display: flex;
  flex-direction: column;
  gap: 3px;
}
.combo {
  height: 21px;
  flex: none;
  display: flex;
  align-items: center;
  justify-content: space-between;
  padding: 0 4px 0 3px;
  background: #47536a;
  border: 1px solid #2e3542;
  color: #dfe2e6;
}
.combo span { padding-top: 1px; }
.combo em { margin-top: -3px; font: italic 12px "Noto Sans CJK SC", sans-serif; color: #98a0ac; }
.find { width: 18px; height: 18px; }

.dimcol {
  width: 199px;
  padding-top: 5px;
  display: flex;
  flex-direction: column;
  gap: 2px;
}
.dimrow2 { display: flex; align-items: center; height: 22px; }
.layer { width: 16px; height: 16px; margin: 0 2px 0 3px; flex: none; }
.combo-layer { width: 178px; height: 22px; justify-content: flex-start; padding-left: 2px; }
.combo-layer .caret { margin-left: auto; }
.swatch { width: 15px; height: 15px; background: #fff; margin-right: 1px; }
.dimrow3 {
  display: grid;
  grid-template-columns: 25px 46px 20px 33px 20px 1fr;
  align-items: center;
  justify-items: start;
  height: 24px;
  margin-top: 2px;
  padding-left: 0;
}
.si { width: 16px; height: 16px; justify-self: center; flex: none; }
.tx { display: flex; align-items: center; gap: 5px; padding-left: 1px; white-space: nowrap; }
.dimtools {
  width: 74px;
  padding-top: 7px;
  display: grid;
  grid-template-columns: repeat(3, 25px);
  grid-auto-rows: 24px;
  justify-items: center;
  align-items: center;
}

.stack {
  width: 199px;
  padding-top: 5px;
  display: flex;
  flex-direction: column;
}
.stack .row {
  height: 24px;
  display: grid;
  grid-template-columns: 24px 24px 1fr;
  align-items: center;
  justify-items: center;
}
.stack .row .tx { justify-self: start; }
.stack .combo + .row { margin-top: 3px; }

.scale-rows { padding-top: 5px; }
.scale-rows .row {
  height: 24px;
  display: grid;
  grid-template-columns: 22px 1fr;
  align-items: center;
  justify-items: center;
}
.scale-rows .tx { justify-self: start; padding-left: 2px; }

/* document tabs */
.doctabs {
  height: 27px;
  flex: none;
  display: grid;
  grid-template-columns: 121px 181px 202px 179px 120px 260px 32px;
  column-gap: 4px;
  padding: 5px 0 0 16px;
  background: #202731;
  color: #aab0b9;
}
.dtab {
  display: flex;
  align-items: center;
  justify-content: space-between;
  padding: 2px 9px 0 10px;
  background: #2c333f;
  border-radius: 8px 8px 0 0;
  white-space: nowrap;
  overflow: hidden;
}
.dtab:first-child { padding-left: 12px; }
.dtab.active { background: #3b4454; color: #dfe2e6; }
.x { width: 9px; height: 9px; flex: none; }
.x path { fill: none; stroke: #a3a9b2; stroke-width: 2; }
.dplus { text-align: center; font-size: 17px; line-height: 22px; color: #8f96a0; }
.docstrip { height: 4px; flex: none; background: #3b4454; }

/* canvas */
.canvas {
  position: relative;
  flex: 1;
  background: #212830;
  overflow: hidden;
}
.vplabel {
  position: absolute;
  left: 0; top: 7px;
  color: #d7dade;
  font-size: 13px;
  white-space: nowrap;
}
.drawing {
  position: absolute;
  left: 0; top: 0;
  width: 1910px;
  height: 817px;
}
.drawing text { font-family: "Noto Sans CJK SC", sans-serif; font-weight: 300; }
.t-title { font-size: 23.500px; fill: #14c41e; }
.t-red text { font-size: 15.500px; fill: #e01f22; }
.t-head { font-size: 28px; fill: #e6e8ea; }
.t-lab text { font-size: 16.500px; fill: #e8eaec; }
.drawing .t-dim text {
  font-family: "Liberation Sans", sans-serif;
  font-weight: 400;
  font-size: 14px;
  fill: #22c02c;
  text-anchor: middle;
  dominant-baseline: auto;
}
.drawing .t-dim .dim-w { fill: #dfe2e4; }
.ln-w path { fill: none; stroke: #d6d9dc; stroke-width: 1.100; }
.ln-wt path { fill: none; stroke: #dfe2e4; stroke-width: 1.200; }
.pick { fill: none; stroke: #f0f2f3; stroke-width: 1.200; }
.ar-w polygon { fill: #e6e8ea; }
.ln-g path { fill: none; stroke: #22c62c; stroke-width: 1.200; }
.ar-g polygon { fill: #22d22c; }
.box-thick { fill: none; stroke: #f4f5f6; stroke-width: 3; }
.box { fill: none; stroke: #d5d8da; stroke-width: 1.500; }
.circ { fill: none; stroke: #dfe2e4; stroke-width: 1.300; }
.ucs path, .ucs rect { fill: none; stroke: #d5d8da; stroke-width: 1; }
.drawing .ucs-t { font-family: "Liberation Sans", sans-serif; font-size: 18px; fill: #d5d8da; }

/* navigation bar */
.navbar {
  position: absolute;
  right: 5px;
  top: 3px;
  width: 33px;
  height: 240px;
  padding: 1px 0 4px;
  display: flex;
  flex-direction: column;
  align-items: center;
  background: #4b525e;
  border-radius: 4px;
}
.navbar path, .navbar circle, .navbar rect { fill: none; stroke: #666d79; stroke-width: 1.200; }
.nv { width: 26px; height: 26px; margin: 1px 0; flex: none; }
.nv-top { width: 8px; height: 6px; align-self: flex-end; margin: 0 3px 8px; flex: none; }
.nv-bottom { margin: auto 3px 0; }
.nv-caret {
  width: 0; height: 0; margin: 6px 0 7px;
  border-left: 2.500px solid transparent;
  border-right: 2.500px solid transparent;
  border-top: 3px solid #666d79;
}
.nv-caret-tight { margin: 0 0 5px; }
.nv-mini { width: 24px; height: 12px; flex: none; }
.nv-play { width: 24px; height: 16px; flex: none; }

/* command line */
.cmdline {
  position: absolute;
  left: 383px;
  bottom: 1px;
  width: 1149px;
  height: 25px;
  display: flex;
}
.cmd-handle {
  width: 55px;
  flex: none;
  background: #2b323e;
  display: flex;
  align-items: center;
  padding-left: 3px;
  gap: 4px;
}
.grip {
  width: 6px; height: 20px;
  background: repeating-linear-gradient(to bottom, #aeb3ba 0 2px, #2b323e 2px 3px);
}
.cmd-x { width: 9px; height: 9px; }
.cmd-x path { fill: none; stroke: #c9cdd2; stroke-width: 1.600; }
.cmd-wr { width: 14px; height: 16px; margin-left: 6px; }
.cmd-wr path { fill: #d3d6da; }
.cmd-input {
  flex: 1;
  display: flex;
  align-items: center;
  gap: 3px;
  padding: 0 10px 0 4px;
  background: #b9bcbc;
  border-radius: 2px;
}
.cmd-ic { width: 18px; height: 14px; }
.cmd-ic path { fill: none; stroke: #70757a; stroke-width: 1; }
.cmd-input em {
  margin: -3px 0 0 2px;
  font: italic 12px "Noto Sans CJK SC", sans-serif;
  color: #6a6f73;
}
.cmd-up {
  margin-left: auto;
  width: 0; height: 0;
  border-left: 3.500px solid transparent;
  border-right: 3.500px solid transparent;
  border-bottom: 4px solid #5a5f63;
}

/* status bar */
.statusbar {
  height: 25px;
  flex: none;
  display: flex;
  background: #212830;
  border-top: 1px solid #39414d;
}
.ltabs { display: flex; padding-left: 9px; gap: 2px; }
.ltab {
  width: 51px;
  text-align: center;
  line-height: 18px;
  color: #a9afb8;
  background: #2c333f;
  border-radius: 0 0 6px 6px;
}
.ltab:first-child { width: 46px; }
.ltab.active { background: #3b4454; color: #e8eaec; font-weight: 700; }
.ltab-add { width: 24px; margin-left: 3px; font-size: 16px; line-height: 17px; }
.stat {
  margin-left: auto;
  width: 644px;
  display: grid;
  grid-template-columns: 181px 30px 24px 26px 17px 23px 27px 22px 18px 22px 18px 22px 28px 14px 28px 56px 20px 20px 28px 20px;
  align-items: stretch;
  justify-items: center;
  background: #2d3440;
}
.stat > * { align-self: center; }
.coords {
  justify-self: end;
  padding-right: 6px;
  color: #d6d9dd;
  white-space: nowrap;
  font-size: 11.500px;
}
.st-model { color: #d6d9dd; }
.st { width: 15px; height: 15px; }
.st path, .st circle { fill: none; stroke: #d5d8dc; stroke-width: 1.100; }
.st path.dots { stroke-width: 2; stroke-linecap: round; }
.st .fill { fill: #e8eaec; stroke: none; }
.st .ruler { stroke: #2d3440; stroke-width: 1.200; }
.st .gear { stroke-width: 2.600; }
.st rect.on-fill { fill: #5a8dbb; stroke: #e8eaec; stroke-width: 1; }
.st .st-yl { fill: #e8b93f; stroke: none; }
.st .st-gn { stroke: #62c276; stroke-width: 2; }
.cell {
  width: 100%;
  height: 22px;
  margin-top: 2px;
  display: flex;
  align-items: center;
  justify-content: center;
}
.cell.on { background: #5585b2; }
.st-unit { justify-self: start; padding-left: 6px; color: #d6d9dd; }

/* input method bar */
.ime {
  position: absolute;
  left: 704px;
  bottom: 0;
  width: 187px;
  height: 28px;
  padding: 3px 2px 3px 0;
  background: #050505;
}
.ime-inner {
  position: relative;
  height: 22px;
  margin-left: 29px;
  background: #f7f9fb;
  display: grid;
  grid-template-columns: 21px 21px 22px 23px 23px 20px 24px;
  align-items: center;
  justify-items: center;
  padding-left: 4px;
}
.ime-s {
  position: absolute;
  left: -25px;
  top: -2px;
  width: 25px;
  height: 26px;
  background: #e2562a;
  border-radius: 4px;
  color: #fff;
  font: bold 22px/26px "Liberation Sans", sans-serif;
  text-align: center;
  transform: rotate(-5deg);
}
.ime-zh { font: bold 14px/1 "Noto Sans CJK SC", sans-serif; color: #2b6ea5; }
.ime-p { font: bold 14px/1 "Liberation Sans", sans-serif; color: #2b6ea5; }
.ime-ic { width: 15px; height: 15px; }
.ime-f { fill: #2b6ea5; }
.ime-w { fill: none; stroke: #f7f9fb; stroke-width: 1.400; }
.ime-g { fill: #b3bbc2; }
```
